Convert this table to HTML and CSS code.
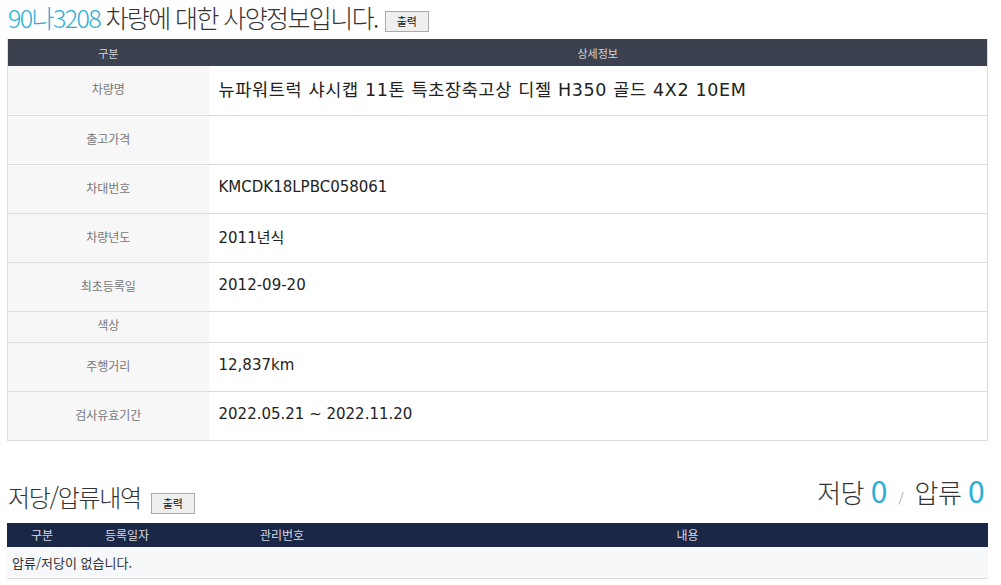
FILE: index.html
```html
<!DOCTYPE html>
<html lang="ko">
<head>
<meta charset="utf-8">
<link rel="stylesheet" href="styles.css">
</head>
<body>
<div class="page">
  <div class="title-row">
    <h1 class="title"><span class="plate">90나3208</span> 차량에 대한 사양정보입니다.</h1>
    <button class="btn">출력</button>
  </div>
  <table class="spec">
    <colgroup><col class="c-label"><col></colgroup>
    <thead>
      <tr><th>구분</th><th>상세정보</th></tr>
    </thead>
    <tbody>
      <tr><td class="lbl">차량명</td><td class="val big">뉴파워트럭 샤시캡 11톤 특초장축고상 디젤 H350 골드 4X2 10EM</td></tr>
      <tr><td class="lbl">출고가격</td><td class="val"></td></tr>
      <tr><td class="lbl">차대번호</td><td class="val">KMCDK18LPBC058061</td></tr>
      <tr><td class="lbl">차량년도</td><td class="val">2011년식</td></tr>
      <tr><td class="lbl">최초등록일</td><td class="val">2012-09-20</td></tr>
      <tr class="short"><td class="lbl">색상</td><td class="val"></td></tr>
      <tr><td class="lbl">주행거리</td><td class="val">12,837km</td></tr>
      <tr><td class="lbl">검사유효기간</td><td class="val">2022.05.21 ~ 2022.11.20</td></tr>
    </tbody>
  </table>

  <div class="sec-row">
    <div class="sec-left">
      <h2 class="sec-title">저당/압류내역</h2>
      <button class="btn">출력</button>
    </div>
    <div class="counts">저당 <span class="num">0</span> <span class="slash">/</span> 압류 <span class="num">0</span></div>
  </div>
  <table class="lien">
    <colgroup><col class="l1"><col class="l2"><col class="l3"><col></colgroup>
    <thead>
      <tr><th>구분</th><th>등록일자</th><th>관리번호</th><th>내용</th></tr>
    </thead>
    <tbody>
      <tr><td colspan="4">압류/저당이 없습니다.</td></tr>
    </tbody>
  </table>
</div>
</body>
</html>
```
FILE: styles.css
```css
* { box-sizing: border-box; }
html, body { margin: 0; padding: 0; background: #fff; }
body { font-family: "Noto Sans CJK KR", "Noto Sans", sans-serif; color: #333; }
.page { width: 981px; margin-left: 7px; }

.title-row { height: 39px; display: flex; align-items: center; gap: 7px; }
.title { margin: 0; font-size: 25px; font-weight: 300; letter-spacing: -1.6px; line-height: 30px; color: #333; padding-left: 1px; margin-top: -5px; }
.plate { color: #2aaed8; }
.btn { font-family: "Noto Sans CJK KR", sans-serif; font-size: 11px; color: #111; background: #efefef; border: 1px solid #a9a9a9; width: 44px; height: 21px; padding: 0; line-height: 19px; margin-top: 4px; }

table { border-collapse: collapse; width: 100%; table-layout: fixed; }
.spec { border-left: 1px solid #ddd; border-right: 1px solid #ddd; border-bottom: 1px solid #ddd; }
.c-label { width: 201px; }
.spec th { background: #3c414f; color: #d5d7dc; font-size: 11px; font-weight: 400; height: 27px; padding: 0; text-align: center; }
.spec td { height: 49px; border-top: 1px solid #ddd; padding: 0 0 3px 0; }
.spec tbody tr:first-child td { border-top: 0; }
.spec tr.short td { height: 31px; padding-bottom: 4px; }
.lbl { background: #f7f7f7; color: #777; font-size: 12px; text-align: center; }
.val { background: #fff; color: #222; font-family: "DejaVu Sans", "Noto Sans CJK KR", sans-serif; font-size: 15px; padding-left: 10px !important; }
.val.big { font-size: 17.5px; letter-spacing: 0.65px; }

.sec-row { display: flex; justify-content: space-between; align-items: flex-end; margin-top: 38px; height: 44px; padding-bottom: 9px; }
.sec-left { display: flex; align-items: center; gap: 10px; }
.sec-title { margin: 0; font-size: 24px; font-weight: 300; letter-spacing: -1.3px; line-height: 30px; color: #333; padding-left: 1px; }
.sec-left .btn { margin-top: 12px; }
.counts { font-size: 26px; font-weight: 300; color: #333; letter-spacing: -0.6px; line-height: 32px; padding-right: 4px; }
.num { color: #2aaed8; font-size: 30px; font-weight: 400; }
.slash { font-size: 13px; color: #888; margin: 0 5px; }

.lien .l1 { width: 70px; }
.lien .l2 { width: 100px; }
.lien .l3 { width: 210px; }
.lien th { background: #1a2746; color: #d8dbe3; font-size: 12px; font-weight: 400; height: 24px; padding: 0; text-align: center; }
.lien td { background: #f7f8f9; border-bottom: 1px solid #ddd; height: 32px; font-size: 13px; color: #333; padding: 0 0 0 5px; }
```
